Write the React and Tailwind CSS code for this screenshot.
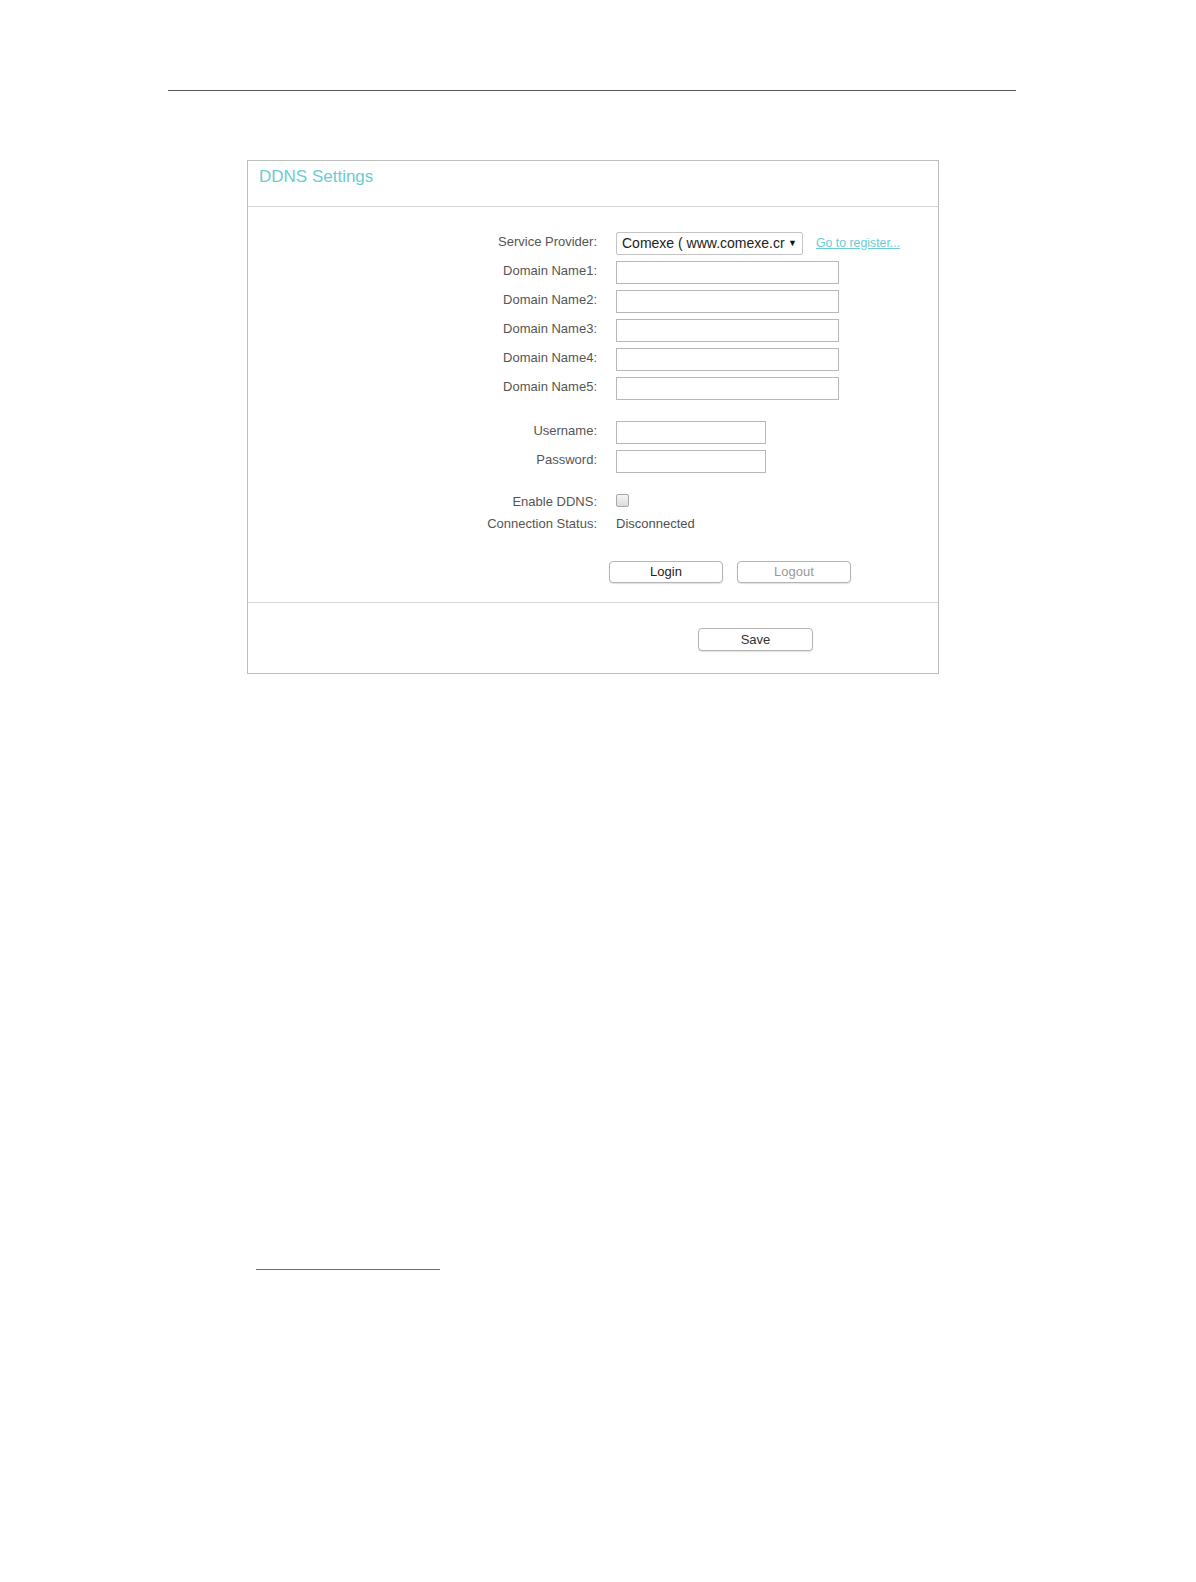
import React from "react";

const font = { fontFamily: '"Liberation Sans", Arial, sans-serif' };

function Row({ label, children, className = "", labelPad = "pt-[2px]" }) {
  return (
    <div className={"flex items-start " + className}>
      <div className={"w-[349px] shrink-0 text-right text-[13px] leading-[15px] text-[#555] " + labelPad}>
        {label}
      </div>
      <div className="ml-[19px] flex items-center">{children}</div>
    </div>
  );
}

function TextInput({ w = "w-[223px]" }) {
  return <div className={w + " h-[23px] border border-[#b8b8b8] bg-white"} />;
}

function Button({ children, dim }) {
  return (
    <div
      className={
        "w-[114px] h-[22px] rounded-[4px] border border-[#b4b4b4] bg-white shadow-[0_1px_1px_rgba(0,0,0,0.12)] flex items-center justify-center text-[13px] " +
        (dim ? "text-[#9a9a9a]" : "text-[#2a2222]")
      }
    >
      {children}
    </div>
  );
}

export default function App() {
  return (
    <div className="w-[1196px] min-h-[1582px] bg-white" style={font}>
      <div className="pt-[90px] pl-[168px]">
        <div className="w-[848px] h-px bg-[#5a5a5a]" />
      </div>

      <div className="mt-[69px] ml-[247px] w-[692px] border border-[#bdbdbd]">
        <div className="h-[46px] border-b border-[#d6d6d6] pl-[11px] pt-[6px]">
          <div className="text-[17px] leading-[19px] text-[#6ccbd3]">DDNS Settings</div>
        </div>

        <div className="pt-[25px] pb-[19px] border-b border-[#d6d6d6]">
          <Row label="Service Provider:">
            <div className="w-[187px] h-[23px] border border-[#c4c4c4] rounded-[2px] bg-white flex items-center pl-[5px] pr-[5px] text-[14px] text-[#222]">
              <span className="flex-1 whitespace-nowrap overflow-hidden">Comexe ( www.comexe.cr</span>
              <span className="text-[9px] leading-none text-[#111] ml-[2px]">▼</span>
            </div>
            <a className="ml-[13px] text-[12.3px] leading-[14px] text-[#6ccbd3] underline -mt-[2px]">Go to register...</a>
          </Row>
          <Row label="Domain Name1:" className="mt-[6px]"><TextInput /></Row>
          <Row label="Domain Name2:" className="mt-[6px]"><TextInput /></Row>
          <Row label="Domain Name3:" className="mt-[6px]"><TextInput /></Row>
          <Row label="Domain Name4:" className="mt-[6px]"><TextInput /></Row>
          <Row label="Domain Name5:" className="mt-[6px]"><TextInput /></Row>

          <Row label="Username:" className="mt-[21px]"><TextInput w="w-[150px]" /></Row>
          <Row label="Password:" className="mt-[6px]"><TextInput w="w-[150px]" /></Row>

          <Row label="Enable DDNS:" className="mt-[21px]" labelPad="pt-0">
            <div className="w-[13px] h-[13px] rounded-[2px] border border-[#a8a8a8] bg-gradient-to-b from-[#f4f4f4] to-[#dcdcdc]" />
          </Row>
          <Row label="Connection Status:" className="mt-[7px]" labelPad="pt-0">
            <div className="text-[13px] leading-[15px] text-[#505050]">Disconnected</div>
          </Row>

          <div className="mt-[30px] pl-[361px] flex gap-[14px]">
            <Button>Login</Button>
            <Button dim>Logout</Button>
          </div>
        </div>

        <div className="pt-[25px] pb-[22px] pl-[450px]">
          <div className="w-[115px] h-[23px] rounded-[4px] border border-[#b4b4b4] bg-white shadow-[0_1px_1px_rgba(0,0,0,0.12)] flex items-center justify-center text-[13px] text-[#333]">
            Save
          </div>
        </div>
      </div>

      <div className="mt-[595px] ml-[256px] w-[184px] h-px bg-[#3f7f88]" />
    </div>
  );
}
